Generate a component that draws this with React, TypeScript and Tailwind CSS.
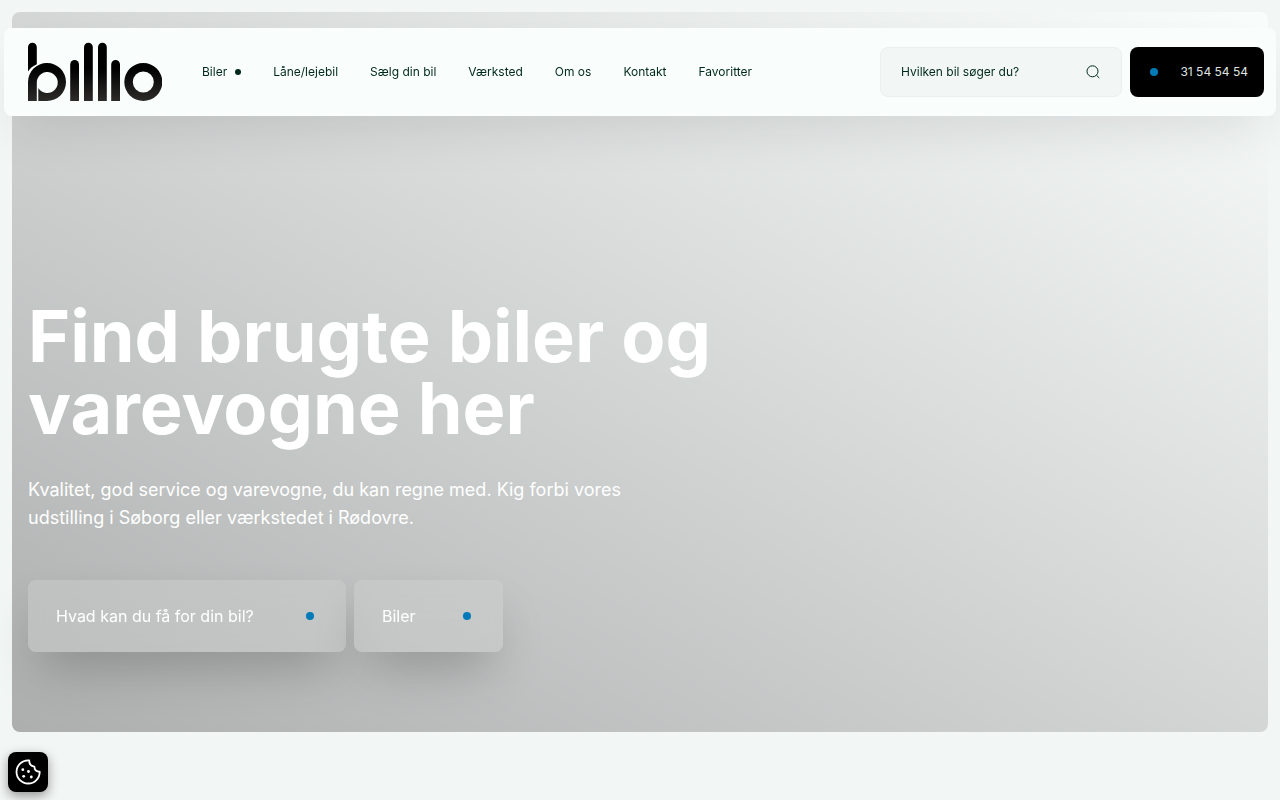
import React from "react";

const navItems = [
  { label: "Biler", hasMenu: true },
  { label: "Låne/lejebil" },
  { label: "Sælg din bil" },
  { label: "Værksted" },
  { label: "Om os" },
  { label: "Kontakt" },
  { label: "Favoritter" },
];

const actions = [
  { label: "Hvad kan du få for din bil?", width: "w-[318px]" },
  { label: "Biler", width: "w-[149px]" },
];

function Logo() {
  return (
    <svg viewBox="28 42 134 60" className="h-[60px] w-[134px]" role="img" aria-label="billio">
      <defs>
        <linearGradient id="ink" gradientUnits="userSpaceOnUse" x1="0" y1="68" x2="0" y2="102">
          <stop offset="0" stopColor="#000000" />
          <stop offset="1" stopColor="#2e2c2b" />
        </linearGradient>
      </defs>
      <g fill="url(#ink)">
        <path d="M28 47.2a4.4 4.4 0 0 1 8.800 0V64.200Q31 66.800 28 71.500Z" />
        <path d="M28 101V82A19 19 0 1 1 47 101H38.300V88A10.500 10.500 0 1 0 36.800 82V101Z" />
        <path d="M70.200 101V64.400a4.400 4.400 0 0 1 8.800 0V101Z" />
        <path d="M84 101V47.200a4.400 4.400 0 0 1 8.800 0V101Z" />
        <path d="M98 101V47.200a4.400 4.400 0 0 1 8.800 0V101Z" />
        <path d="M111.200 101V64.400a4.400 4.400 0 0 1 8.800 0V101Z" />
        <path fillRule="evenodd" d="M124.300 82a19 19 0 1 1 38 0a19 19 0 1 1 -38 0ZM132.800 82a10.500 10.500 0 1 0 21 0a10.500 10.500 0 1 0 -21 0Z" />
      </g>
    </svg>
  );
}

function CookieIcon() {
  return (
    <svg viewBox="0 0 26 26" className="size-[26px]" fill="none" stroke="#fff" strokeWidth="1.800" strokeLinejoin="round" aria-hidden="true">
      <path d="M13.300 1.300A11.600 11.600 0 1 0 24.700 12.700C22.500 12.900 19.600 11.800 19.300 7.600C16.200 7.200 14 5 14.200 1.300Z" />
      <g fill="#fff" stroke="none">
        <circle cx="7.800" cy="10.700" r="1.400" />
        <circle cx="13.500" cy="12.500" r="1.400" />
        <circle cx="8.700" cy="17.300" r="1.400" />
        <circle cx="16.300" cy="18" r="1.400" />
      </g>
    </svg>
  );
}

export default function App() {
  return (
    <div className="min-h-screen bg-[#f2f6f5] p-3 font-['Inter',sans-serif] text-[#00291e]">
      {/* Floating header */}
      <header className="fixed inset-x-1 top-7 z-10 flex h-[88px] items-center rounded-lg bg-[#f9fdfc] pr-3 pl-6 shadow-[0_25px_50px_-12px_rgba(0,0,0,0.1)]">
        <a href="#" className="mr-10 shrink-0">
          <Logo />
        </a>
        <nav className="flex items-center gap-8 text-xs whitespace-nowrap">
          {navItems.map((item) => (
            <a key={item.label} href="#" className="flex items-center gap-2">
              {item.label}
              {item.hasMenu && <span className="size-1.5 rounded-full bg-[#00291e]" />}
            </a>
          ))}
        </nav>
        <div className="ml-auto flex gap-2">
          <label className="flex h-[50px] w-[242px] items-center rounded-lg border border-[#ebefee] bg-[#f2f6f5] px-5">
            <input
              type="text"
              aria-label="Søg efter bil"
              placeholder="Hvilken bil søger du?"
              className="min-w-0 flex-1 bg-transparent text-xs outline-none placeholder:text-[#00291e]"
            />
            <svg viewBox="0 0 16 16" className="size-4" fill="none" stroke="#00291e" strokeWidth="1" aria-hidden="true">
              <circle cx="7.500" cy="7.300" r="5.500" />
              <path d="M11.500 11.300L14.300 14" />
            </svg>
          </label>
          <a href="tel:31545454" className="flex h-[50px] w-[134px] items-center justify-between rounded-lg bg-black pr-4 pl-5 text-xs whitespace-nowrap text-[#dfe3e2]">
            <span className="size-2 rounded-full bg-[#007ab8]" />
            31 54 54 54
          </a>
        </div>
      </header>

      {/* Hero */}
      <main className="flex min-h-[720px] flex-col justify-end rounded-lg bg-[#f9fdfc] bg-linear-to-tr/srgb from-black/31 to-transparent px-4 pb-20 text-white">
        <h1 className="max-w-[720px] text-[72px] leading-[72px] font-bold">Find brugte biler og varevogne her</h1>
        <p className="mt-8 max-w-[640px] text-lg leading-7">
          Kvalitet, god service og varevogne, du kan regne med. Kig forbi vores udstilling i Søborg eller værkstedet i Rødovre.
        </p>
        <div className="mt-12 flex gap-2">
          {actions.map((action) => (
            <a
              key={action.label}
              href="#"
              className={`flex h-[72px] items-center justify-between rounded-lg bg-[#d2d2d2]/40 pr-8 pl-7 shadow-[0_25px_50px_-12px_rgba(0,0,0,0.25)] backdrop-blur-lg ${action.width}`}
            >
              {action.label}
              <span className="size-2 rounded-full bg-[#007ab8]" />
            </a>
          ))}
        </div>
      </main>

      <button
        type="button"
        aria-label="Cookieindstillinger"
        className="fixed bottom-2 left-2 flex size-10 items-center justify-center rounded-lg bg-black shadow-[0_4px_12px_rgba(0,0,0,0.4)]"
      >
        <CookieIcon />
      </button>
    </div>
  );
}
